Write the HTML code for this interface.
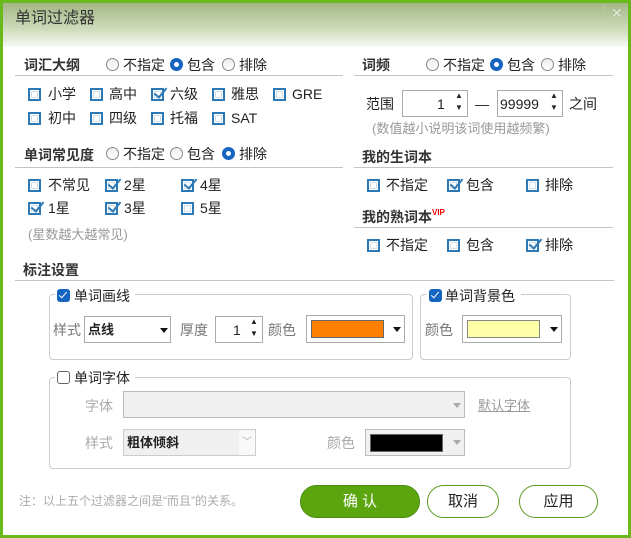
<!DOCTYPE html>
<html><head><meta charset="utf-8"><style>
*{box-sizing:border-box;margin:0;padding:0}
body{width:631px;height:538px;overflow:hidden;font-family:"Liberation Sans","Noto Sans CJK SC",sans-serif;font-size:14px;color:#222;background:#fff}
.frame{position:absolute;left:0;top:0;width:631px;height:538px;border:3px solid #69b81c;background:#fff}
.title{position:absolute;left:0;top:0;width:625px;height:44px;background:linear-gradient(#a3b685,#cfdcbc 60%,#f7f9f3)}
.a{position:absolute;white-space:nowrap;line-height:18px}
.b{font-weight:bold;color:#333}
.ln{position:absolute;height:1px;background:#c4c4c4}
.cb{position:absolute;width:13px;height:13px;border:2px solid #2c79b5;background:#fff;box-shadow:inset 0 0 0 1px #fff,inset 0 0 0 2px #cfe0ef}
.ck::after{content:"";position:absolute;left:4px;top:-5px;width:5px;height:11px;border-right:2px solid #2c79b5;border-bottom:2px solid #2c79b5;transform:rotate(40deg)}
.rd{position:absolute;width:13px;height:13px;border-radius:50%;border:1px solid #888;background:linear-gradient(#eee,#fff)}
.rd.on{border:4px solid #1565c0;background:#fff}
.g{color:#999}
.box{position:absolute;border:1px solid #aaa;background:#fff}
.grp{position:absolute;border:1px solid #ccc;border-radius:4px}
.bcb{position:absolute;width:13px;height:13px;border-radius:3px;background:#1565c0}
.bcb::after{content:"";position:absolute;left:4px;top:1px;width:3px;height:7px;border-right:1.5px solid #fff;border-bottom:1.5px solid #fff;transform:rotate(40deg)}
.tri{position:absolute;width:0;height:0;border-left:4px solid transparent;border-right:4px solid transparent;border-top:5px solid #111}
.btn{position:absolute;border-radius:17px;border:1px solid #5a9a20;text-align:center;line-height:31px;font-size:15px}
</style></head><body>
<div class="frame"></div>
<div class="title" style="left:3px;top:3px"></div>
<div class="a" style="left:15px;top:10px;font-size:16px;color:#333">单词过滤器</div>
<div style="position:absolute;left:604px;top:4px;width:1px;height:16px;background:#b8c8a8"></div>
<div class="a" style="left:611px;top:4px;color:#e4ecdc;font-size:14px;text-shadow:0 0 1px #8a9a80">✕</div>

<div class="a b" style="left:24px;top:56px">词汇大纲</div>
<div class="rd" style="left:106px;top:58px"></div><div class="a" style="left:123px;top:56px">不指定</div>
<div class="rd on" style="left:170px;top:58px"></div><div class="a" style="left:187px;top:56px">包含</div>
<div class="rd" style="left:222px;top:58px"></div><div class="a" style="left:239px;top:56px">排除</div>
<div class="ln" style="left:15px;top:75px;width:328px"></div>
<div class="cb" style="left:28px;top:88px"></div><div class="a" style="left:48px;top:85px">小学</div>
<div class="cb" style="left:90px;top:88px"></div><div class="a" style="left:109px;top:85px">高中</div>
<div class="cb ck" style="left:151px;top:88px"></div><div class="a" style="left:170px;top:85px">六级</div>
<div class="cb" style="left:212px;top:88px"></div><div class="a" style="left:231px;top:85px">雅思</div>
<div class="cb" style="left:273px;top:88px"></div><div class="a" style="left:292px;top:85px">GRE</div>
<div class="cb" style="left:28px;top:112px"></div><div class="a" style="left:48px;top:109px">初中</div>
<div class="cb" style="left:90px;top:112px"></div><div class="a" style="left:109px;top:109px">四级</div>
<div class="cb" style="left:151px;top:112px"></div><div class="a" style="left:170px;top:109px">托福</div>
<div class="cb" style="left:212px;top:112px"></div><div class="a" style="left:231px;top:109px">SAT</div>

<div class="a b" style="left:24px;top:146px">单词常见度</div>
<div class="rd" style="left:106px;top:147px"></div><div class="a" style="left:123px;top:145px">不指定</div>
<div class="rd" style="left:170px;top:147px"></div><div class="a" style="left:187px;top:145px">包含</div>
<div class="rd on" style="left:222px;top:147px"></div><div class="a" style="left:239px;top:145px">排除</div>
<div class="ln" style="left:15px;top:167px;width:328px"></div>
<div class="cb" style="left:28px;top:179px"></div><div class="a" style="left:48px;top:176px">不常见</div>
<div class="cb ck" style="left:105px;top:179px"></div><div class="a" style="left:124px;top:176px">2星</div>
<div class="cb ck" style="left:181px;top:179px"></div><div class="a" style="left:200px;top:176px">4星</div>
<div class="cb ck" style="left:28px;top:202px"></div><div class="a" style="left:48px;top:199px">1星</div>
<div class="cb ck" style="left:105px;top:202px"></div><div class="a" style="left:124px;top:199px">3星</div>
<div class="cb" style="left:181px;top:202px"></div><div class="a" style="left:200px;top:199px">5星</div>
<div class="a g" style="left:28px;top:226px;font-size:13px">(星数越大越常见)</div>

<div class="a b" style="left:362px;top:56px">词频</div>
<div class="rd" style="left:426px;top:58px"></div><div class="a" style="left:443px;top:56px">不指定</div>
<div class="rd on" style="left:490px;top:58px"></div><div class="a" style="left:507px;top:56px">包含</div>
<div class="rd" style="left:541px;top:58px"></div><div class="a" style="left:558px;top:56px">排除</div>
<div class="ln" style="left:354px;top:75px;width:259px"></div>
<div class="a" style="left:366px;top:95px">范围</div>
<div class="box" style="left:402px;top:90px;width:66px;height:27px"></div>
<div class="a" style="left:437px;top:95px">1</div>
<div class="a" style="left:455px;top:90px;font-size:8px;line-height:12px">▲<br>▼</div>
<div class="a" style="left:475px;top:95px">—</div>
<div class="box" style="left:497px;top:90px;width:66px;height:27px"></div>
<div class="a" style="left:500px;top:95px">99999</div>
<div class="a" style="left:550px;top:90px;font-size:8px;line-height:12px">▲<br>▼</div>
<div class="a" style="left:569px;top:95px">之间</div>
<div class="a g" style="left:372px;top:120px;font-size:13px">(数值越小说明该词使用越频繁)</div>

<div class="a b" style="left:362px;top:148px">我的生词本</div>
<div class="ln" style="left:354px;top:167px;width:259px"></div>
<div class="cb" style="left:367px;top:179px"></div><div class="a" style="left:386px;top:176px">不指定</div>
<div class="cb ck" style="left:447px;top:179px"></div><div class="a" style="left:466px;top:176px">包含</div>
<div class="cb" style="left:526px;top:179px"></div><div class="a" style="left:545px;top:176px">排除</div>

<div class="a b" style="left:362px;top:208px">我的熟词本<span style="color:#e00;font-size:8px;vertical-align:top;line-height:10px">VIP</span></div>
<div class="ln" style="left:354px;top:227px;width:259px"></div>
<div class="cb" style="left:367px;top:239px"></div><div class="a" style="left:386px;top:236px">不指定</div>
<div class="cb" style="left:447px;top:239px"></div><div class="a" style="left:466px;top:236px">包含</div>
<div class="cb ck" style="left:526px;top:239px"></div><div class="a" style="left:545px;top:236px">排除</div>

<div class="a b" style="left:23px;top:261px">标注设置</div>
<div class="ln" style="left:15px;top:280px;width:599px"></div>

<div class="grp" style="left:49px;top:294px;width:364px;height:66px"></div>
<div class="a" style="left:55px;top:286px;background:#fff;width:80px;height:18px"></div>
<div class="bcb" style="left:57px;top:289px"></div><div class="a" style="left:74px;top:287px">单词画线</div>
<div class="a g" style="left:53px;top:321px;color:#777">样式</div>
<div class="box" style="left:84px;top:316px;width:87px;height:27px"></div>
<div class="a" style="left:88px;top:321px;font-weight:bold;font-size:13px">点线</div>
<div class="tri" style="left:160px;top:328px"></div>
<div class="a" style="left:180px;top:321px;color:#777">厚度</div>
<div class="box" style="left:215px;top:316px;width:48px;height:27px"></div>
<div class="a" style="left:233px;top:321px">1</div>
<div class="a" style="left:250px;top:316px;font-size:8px;line-height:12px">▲<br>▼</div>
<div class="a" style="left:268px;top:321px;color:#777">颜色</div>
<div class="box" style="left:306px;top:315px;width:99px;height:28px"></div>
<div style="position:absolute;left:311px;top:320px;width:73px;height:18px;background:#ff8000;border:1px solid #666"></div>
<div class="tri" style="left:393px;top:327px"></div>

<div class="grp" style="left:420px;top:294px;width:151px;height:66px"></div>
<div class="a" style="left:426px;top:286px;background:#fff;width:95px;height:18px"></div>
<div class="bcb" style="left:429px;top:289px"></div><div class="a" style="left:445px;top:287px">单词背景色</div>
<div class="a" style="left:425px;top:321px;color:#777">颜色</div>
<div class="box" style="left:462px;top:315px;width:100px;height:28px"></div>
<div style="position:absolute;left:467px;top:320px;width:73px;height:18px;background:#ffffa8;border:1px solid #888"></div>
<div class="tri" style="left:550px;top:327px"></div>

<div class="grp" style="left:49px;top:377px;width:522px;height:92px"></div>
<div class="a" style="left:55px;top:369px;background:#fff;width:80px;height:18px"></div>
<div style="position:absolute;left:57px;top:371px;width:13px;height:13px;border:1px solid #666;border-radius:3px;background:#fff"></div>
<div class="a" style="left:74px;top:369px">单词字体</div>
<div class="a g" style="left:85px;top:397px;color:#aaa">字体</div>
<div style="position:absolute;left:123px;top:391px;width:342px;height:27px;border:1px solid #bbb;background:#f0f0f0"></div>
<div class="tri" style="left:453px;top:403px;border-top-color:#aaa"></div>
<div class="a" style="left:478px;top:397px;color:#999;text-decoration:underline;font-size:13px">默认字体</div>
<div class="a g" style="left:85px;top:434px;color:#aaa">样式</div>
<div style="position:absolute;left:123px;top:429px;width:133px;height:27px;border:1px solid #ccc;background:#f0f0f0"></div>
<div style="position:absolute;left:239px;top:430px;width:16px;height:25px;background:#f8f8f8"></div>
<div class="a" style="left:127px;top:434px;font-size:13px;font-weight:bold">粗体倾斜</div>
<div class="a" style="left:242px;top:434px;color:#aaa;font-size:10px">﹀</div>
<div class="a" style="left:327px;top:434px;color:#aaa">颜色</div>
<div style="position:absolute;left:365px;top:429px;width:100px;height:27px;border:1px solid #bbb;background:#f0f0f0"></div>
<div style="position:absolute;left:370px;top:434px;width:73px;height:18px;background:#000;border:1px solid #666"></div>
<div class="tri" style="left:453px;top:440px;border-top-color:#aaa"></div>

<div class="a g" style="left:19px;top:492px;font-size:12px;color:#aaa">注：以上五个过滤器之间是“而且”的关系。</div>
<div class="btn" style="left:300px;top:485px;width:120px;height:33px;background:#5ba50e;color:#fff;border-color:#4a8a10">确 认</div>
<div class="btn" style="left:427px;top:485px;width:72px;height:33px;background:#fff">取消</div>
<div class="btn" style="left:519px;top:485px;width:79px;height:33px;background:#fff">应用</div>
</body></html>
